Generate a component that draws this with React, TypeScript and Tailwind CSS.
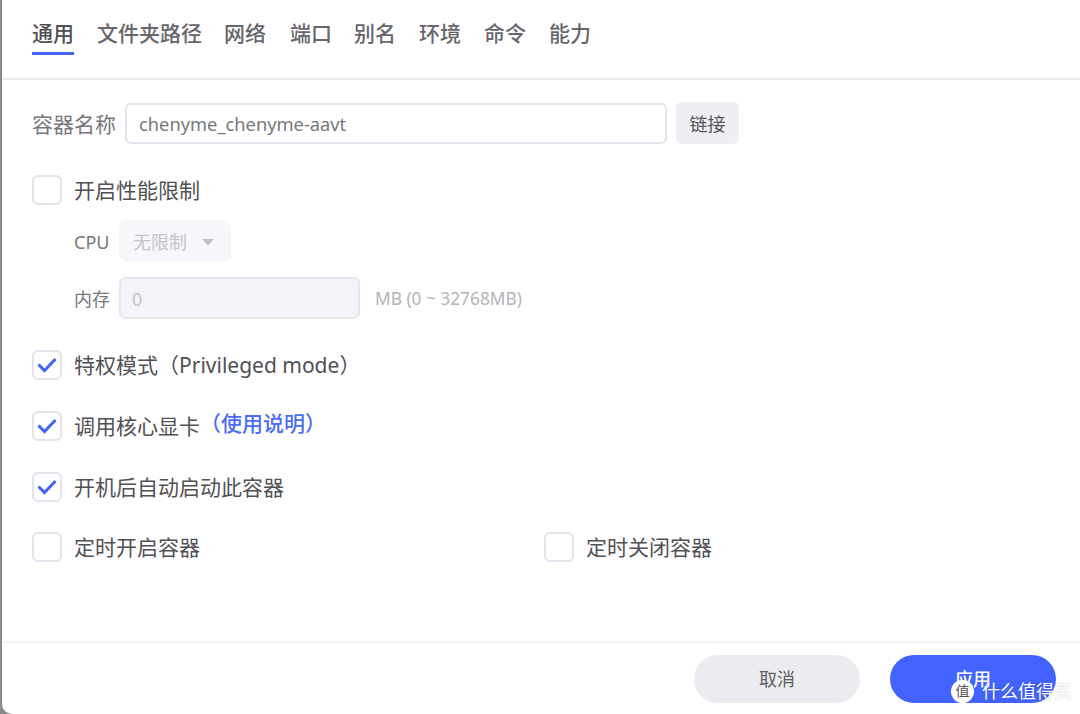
import React from "react";

const FONT = "font-['Noto_Sans','Noto_Sans_CJK_SC',sans-serif]";

function Check({ checked = false }: { checked?: boolean }) {
  return (
    <span className="flex h-[30px] w-[30px] shrink-0 items-center justify-center rounded-[6px] border-2 border-[#e2e3ec] bg-white">
      {checked && (
        <svg width="22" height="18" viewBox="0 0 22 18" fill="none">
          <path d="M2.5 8.5 L8.5 14.5 L19.5 3" stroke="#4263f5" strokeWidth="3" />
        </svg>
      )}
    </span>
  );
}

function Row({ checked, label, className = "" }: { checked?: boolean; label: React.ReactNode; className?: string }) {
  return (
    <div className={`flex items-center gap-[12px] ${className}`}>
      <Check checked={checked} />
      <span className="whitespace-nowrap text-[21px] leading-[30px] text-[#505055]">{label}</span>
    </div>
  );
}

const tabs = [
  ["文件夹路径", "w-[104px]"],
  ["网络", "w-[43px]"],
  ["端口", "w-[41px]"],
  ["别名", "w-[42px]"],
  ["环境", "w-[42px]"],
  ["命令", "w-[42px]"],
  ["能力", "w-[42px]"],
];

export default function App() {
  return (
    <div className={`h-[714px] w-[1080px] overflow-hidden bg-[#8a8a8a] ${FONT}`}>
      <div className="relative ml-[2px] flex h-[714px] w-[1078px] flex-col rounded-bl-[10px] bg-white">
        <div className="flex h-[80px] shrink-0 items-start gap-[23px] border-b-2 border-[#ececf0] pl-[30px] pt-[18px]">
          <div className="flex w-[42px] flex-col">
            <span className="whitespace-nowrap text-[21px] font-medium leading-[30px] text-[#505055]">通用</span>
            <span className="mt-[4px] h-[3px] w-[42px] bg-[#4263f5]" />
          </div>
          {tabs.map(([t, w]) => (
            <span key={t} className={`whitespace-nowrap text-[21px] font-medium leading-[30px] text-[#66666b] ${w}`}>
              {t}
            </span>
          ))}
        </div>

        <div className="flex flex-1 flex-col pl-[30px] pt-[22px]">
          <div className="flex h-[42px] items-start">
            <span className="w-[84px] whitespace-nowrap pt-[2px] text-[21px] leading-[40px] text-[#77777c]">容器名称</span>
            <div className="ml-[9px] mt-[1px] flex h-[41px] w-[542px] items-center rounded-[6px] border-2 border-[#e2e3ec] bg-white pl-[12px] text-[18.3px] text-[#77777c]">
              chenyme_chenyme-aavt
            </div>
            <div className="ml-[9px] flex h-[42px] w-[63px] items-center justify-center rounded-[6px] bg-[#eeeef3] pt-[2px] text-[18px] text-[#55555a]">
              链接
            </div>
          </div>

          <Row label="开启性能限制" className="mt-[31px]" />

          <div className="mt-[15px] flex h-[42px] items-center pl-[42px]">
            <span className="w-[45px] pt-[2px] text-[18px] leading-[40px] text-[#77777c]">CPU</span>
            <div className="flex h-[42px] w-[112px] items-center rounded-[8px] bg-[#f6f7fa] pl-[14px] pt-[2px] text-[18px] text-[#c4c4c8]">
              无限制
              <svg className="ml-[14px]" width="14" height="8" viewBox="0 0 14 8">
                <path d="M1 1 H13 L7 7.5 Z" fill="#c0c0c4" />
              </svg>
            </div>
          </div>

          <div className="mt-[15px] flex h-[42px] items-center pl-[42px]">
            <span className="w-[45px] pt-[2px] text-[18px] leading-[40px] text-[#77777c]">内存</span>
            <div className="flex h-[42px] w-[241px] items-center rounded-[6px] border-2 border-[#e6e8f0] bg-[#f3f4f8] pl-[11px] pt-[2px] text-[18px] text-[#c4c4c8]">
              0
            </div>
            <span className="ml-[15px] whitespace-nowrap pt-[2px] text-[17.3px] text-[#b4b4b8]">MB (0 ~ 32768MB)</span>
          </div>

          <Row checked label="特权模式（Privileged mode）" className="mt-[31px]" />
          <Row
            checked
            className="mt-[31px]"
            label={
              <span className="relative">
                调用核心显卡
                <span className="absolute left-[126px] top-[-4px] text-[21px] font-medium text-[#4a6cf7]">（使用说明）</span>
              </span>
            }
          />
          <Row checked label="开机后自动启动此容器" className="mt-[31px]" />
          <div className="mt-[30px] flex">
            <Row label="定时开启容器" className="w-[512px]" />
            <Row label="定时关闭容器" />
          </div>
        </div>

        <div className="flex h-[73px] shrink-0 items-start gap-[30px] border-t-2 border-[#f3f3f5] pl-[692px] pt-[12px]">
          <div className="flex h-[48px] w-[166px] items-center justify-center rounded-full bg-[#ecebf0] text-[18px] text-[#5f5f64]">
            取消
          </div>
          <div className="flex h-[48px] w-[166px] items-center justify-center rounded-full bg-[#4263ff] text-[18px] font-medium text-white">
            应用
          </div>
        </div>

        <div className="absolute left-[949px] top-[679px] flex items-center gap-[8px] text-white [text-shadow:0_0_2px_rgba(0,0,0,0.25)]">
          <span className="flex h-[23px] w-[23px] items-center justify-center rounded-full bg-white text-[14px] leading-none text-[#55555a] [text-shadow:none]">
            值
          </span>
          <span className="whitespace-nowrap text-[18px] leading-[24px]">什么值得买</span>
        </div>
      </div>
    </div>
  );
}
